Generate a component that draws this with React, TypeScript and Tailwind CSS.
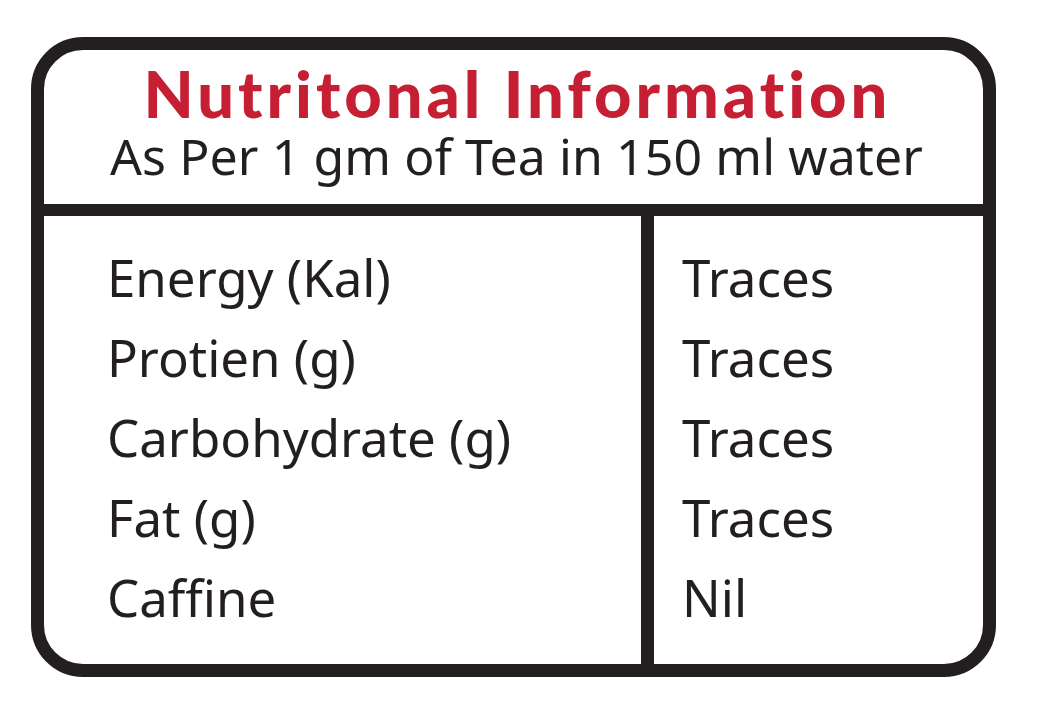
import React from 'react';

const rows = [
  { name: 'Energy (Kal)', value: 'Traces' },
  { name: 'Protien (g)', value: 'Traces' },
  { name: 'Carbohydrate (g)', value: 'Traces' },
  { name: 'Fat (g)', value: 'Traces' },
  { name: 'Caffine', value: 'Nil' },
];

export default function App() {
  return (
    <div className="w-[1044px] h-[709px] bg-white pt-[37px] pl-[31px]">
      <div className="w-[965px] h-[640px] border-[13px] border-[#231f20] rounded-[52px] flex flex-col overflow-hidden text-[#231f20]">
        {/* header */}
        <div className="h-[166px] shrink-0 border-b-[12px] border-[#231f20] flex flex-col items-center pt-[10px]">
          <h1 className="text-[65px] leading-[66px] font-black text-[#c61f33] font-['Lato',sans-serif] tracking-[4px] pl-[8px]">
            Nutritonal Information
          </h1>
          <p className="mt-[1px] text-[50px] leading-[58px] tracking-[0.1px] pl-[6px] font-['Noto_Sans',sans-serif]">
            As Per 1 gm of Tea in 150 ml water
          </p>
        </div>

        {/* table */}
        <div className="flex-1 flex font-['Noto_Sans',sans-serif] text-[51px] leading-[80px]">
          <div className="w-[610px] shrink-0 border-r-[13px] border-[#231f20] pl-[63px] pt-[21px]">
            {rows.map((r) => (
              <div key={r.name}>{r.name}</div>
            ))}
          </div>
          <div className="flex-1 pl-[28px] pt-[21px]">
            {rows.map((r) => (
              <div key={r.name}>{r.value}</div>
            ))}
          </div>
        </div>
      </div>
    </div>
  );
}
